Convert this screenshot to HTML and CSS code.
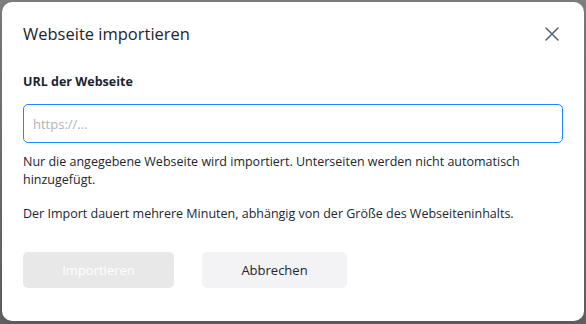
FILE: index.html
```html
<!DOCTYPE html>
<html lang="de">
<head>
  <meta charset="UTF-8" />
  <meta name="viewport" content="width=device-width, initial-scale=1.0"/>
  <title>Webseite importieren</title>
  <link rel="stylesheet" href="styles.css">
</head>
<body>

  <div class="backdrop">
    <!-- Import Dialog -->
    <div class="dialog">
      <div class="dialog-header">
        <h2>Webseite importieren</h2>
        <button class="close" aria-label="Schließen">
          <svg width="14" height="14" viewBox="0 0 14 14">
            <path d="M1 1 L13 13 M13 1 L1 13" stroke="#5b6570" stroke-width="1.6" stroke-linecap="round" fill="none"/>
          </svg>
        </button>
      </div>

      <label class="field-label" for="urlInput">URL der Webseite</label>
      <input type="text" id="urlInput" class="url-input" placeholder="https://..." />

      <p class="hint">Nur die angegebene Webseite wird importiert. Unterseiten werden nicht automatisch hinzugefügt.</p>
      <p class="hint">Der Import dauert mehrere Minuten, abhängig von der Größe des Webseiteninhalts.</p>

      <div class="actions">
        <button class="btn btn-primary" disabled>Importieren</button>
        <button class="btn btn-secondary">Abbrechen</button>
      </div>
    </div>
  </div>

</body>
</html>
```

FILE: styles.css
```css
body {
  margin: 0;
  font-family: "Open Sans", Arial, sans-serif;
  background: linear-gradient(to bottom, #808080, #626262);
  height: 100vh;
  color: #1d2530;
}

.backdrop {
  padding: 2px 2px 3px 2px;
  height: 100%;
  box-sizing: border-box;
}

.dialog {
  background: #fff;
  border-radius: 10px;
  height: 100%;
  box-sizing: border-box;
  padding: 19px 21px 0 21px;
  box-shadow: 0 2px 8px rgba(0,0,0,0.15);
}

.dialog-header {
  display: flex;
  justify-content: space-between;
  align-items: center;
  height: 24px;
}

.dialog-header h2 {
  margin: 0;
  font-size: 16.5px;
  font-weight: 400;
  color: #1c2430;
}

.close {
  background: none;
  border: none;
  padding: 0;
  margin-right: 4px;
  margin-top: 2px;
  cursor: pointer;
  display: flex;
}

.field-label {
  display: block;
  margin-top: 28px;
  font-size: 12.5px;
  font-weight: 700;
  color: #1c2430;
}

.url-input {
  display: block;
  width: 100%;
  box-sizing: border-box;
  margin-top: 14px;
  height: 39px;
  padding: 0 9px;
  border: 1px solid #1e88ff;
  border-radius: 5px;
  font-family: inherit;
  font-size: 13px;
  outline: none;
}

.url-input::placeholder {
  color: #b0b4b8;
}

.hint {
  margin: 10px 0 0 0;
  font-size: 12.5px;
  line-height: 18px;
  color: #1d2530;
}

.hint + .hint {
  margin-top: 16px;
}

.actions {
  display: flex;
  gap: 28px;
  margin-top: 29px;
}

.btn {
  height: 36px;
  border: none;
  border-radius: 5px;
  font-family: inherit;
  font-size: 13px;
  cursor: pointer;
}

.btn-primary {
  width: 151px;
  background: #e8e8e8;
  color: #fff;
}

.btn-secondary {
  width: 145px;
  background: #f3f3f5;
  color: #1d2530;
}
```
